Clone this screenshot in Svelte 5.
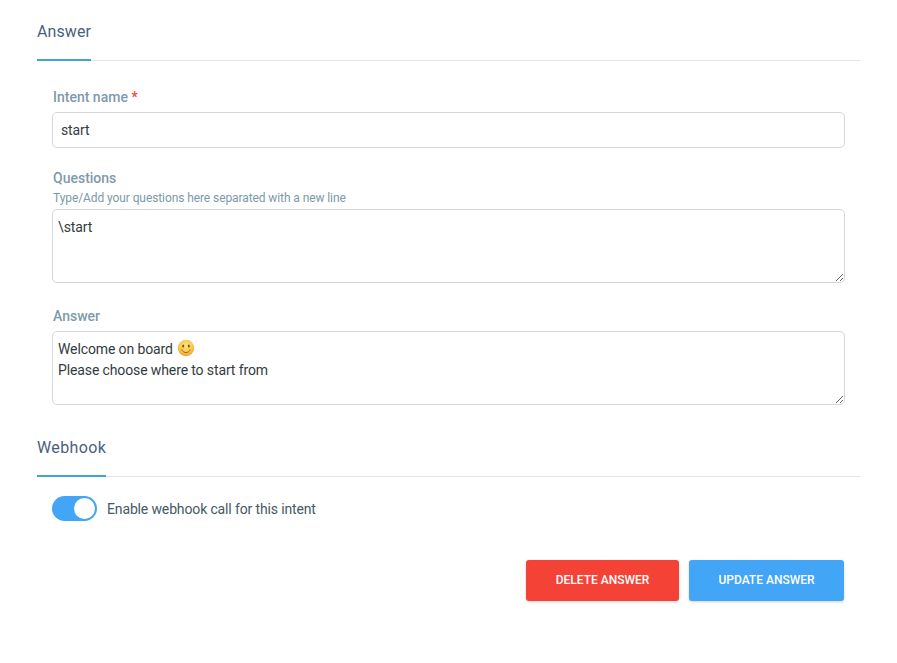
<script>
  let intent = $state('start');
  let questions = $state('\\start');
  let enabled = $state(true);
</script>

<main class="page">
  <header class="section-head first"><h2>Answer</h2></header>

  <div class="fields">
    <label class="field">
      <span class="label">Intent name <em>*</em></span>
      <input class="control" type="text" bind:value={intent} />
    </label>

    <label class="field">
      <span class="label">Questions</span>
      <span class="hint">Type/Add your questions here separated with a new line</span>
      <textarea class="control area" bind:value={questions}></textarea>
    </label>

    <div class="field last">
      <span class="label">Answer</span>
      <div class="control area rich" role="textbox" tabindex="0">
        <div class="line">Welcome on board
          <svg class="smile" viewBox="0 0 18 18" width="18" height="18" aria-hidden="true">
            <defs>
              <radialGradient id="face" cx="50%" cy="35%" r="65%">
                <stop offset="0" stop-color="#fde27a" />
                <stop offset="0.65" stop-color="#fbc64e" />
                <stop offset="1" stop-color="#ee9b2a" />
              </radialGradient>
            </defs>
            <circle cx="9" cy="9" r="8.2" fill="url(#face)" />
            <ellipse cx="6.2" cy="7" rx="1" ry="1.5" fill="#7a5320" />
            <ellipse cx="11.8" cy="7" rx="1" ry="1.5" fill="#7a5320" />
            <path d="M4.8 10.8c1 1.9 2.5 2.7 4.2 2.7s3.2-.8 4.2-2.7" fill="none" stroke="#8a5c20" stroke-width="0.9" stroke-linecap="round" />
          </svg>
        </div>
        <div class="line">Please choose where to start from</div>
      </div>
    </div>
  </div>

  <header class="section-head webhook"><h2>Webhook</h2></header>

  <div class="toggle-row">
    <button class="switch" class:on={enabled} onclick={() => (enabled = !enabled)} aria-label="Toggle webhook"><span class="knob"></span></button>
    <span class="toggle-text">Enable webhook call for this intent</span>
  </div>

  <div class="actions">
    <button class="btn red">DELETE ANSWER</button>
    <button class="btn blue">UPDATE ANSWER</button>
  </div>
</main>

<style>
  :global(body) {
    margin: 0;
    background: #fff;
  }
  .page {
    box-sizing: border-box;
    width: 897px;
    height: 663px;
    padding: 0 37px;
    font-family: Roboto, "Liberation Sans", sans-serif;
    overflow: hidden;
  }
  .section-head {
    width: 823px;
    border-bottom: 1px solid #dfe3e6;
    box-sizing: border-box;
  }
  .section-head.first {
    padding-top: 21px;
    height: 61px;
  }
  .section-head.webhook {
    margin-top: 32px;
    height: 40px;
  }
  h2 {
    display: inline-block;
    margin: 0;
    height: 40px;
    padding-top: 1px;
    box-sizing: border-box;
    font-size: 16px;
    line-height: 20px;
    font-weight: 400;
    letter-spacing: 0.1px;
    color: #4a5f7e;
    border-bottom: 2px solid #42a5d8;
  }
  .webhook h2 { letter-spacing: 0.38px; }
  .fields {
    width: 793px;
    margin-left: 15px;
    padding-top: 28px;
    display: flex;
    flex-direction: column;
    gap: 22px;
  }
  .field {
    display: flex;
    flex-direction: column;
  }
  .field.last { margin-top: 3px; }
  .label {
    padding-left: 1px;
    font-size: 14px;
    line-height: 16px;
    font-weight: 500;
    color: #7f9aaa;
    margin-bottom: 7px;
  }
  .label em {
    font-style: normal;
    color: #f44336;
  }
  .hint {
    padding-left: 1px;
    margin-top: -2px;
    margin-bottom: 3px;
    font-size: 12px;
    line-height: 15px;
    letter-spacing: -0.09px;
    color: #7d99a8;
  }
  .control {
    box-sizing: border-box;
    width: 793px;
    height: 36px;
    padding: 0 8px;
    border: 1px solid #d4d7da;
    border-radius: 5px;
    font-family: inherit;
    font-size: 14px;
    letter-spacing: -0.12px;
    color: #333b40;
    background: #fff;
    outline: none;
  }
  .area {
    display: block;
    height: 74px;
    padding: 7px 5px;
    line-height: 21px;
    resize: vertical;
    overflow: auto;
  }
  .rich .line {
    height: 21px;
    white-space: nowrap;
  }
  .smile {
    vertical-align: -3px;
    margin-left: 1px;
  }
  .toggle-row {
    display: flex;
    align-items: center;
    gap: 10px;
    margin: 19px 0 0 15px;
  }
  .switch {
    position: relative;
    width: 45px;
    height: 25px;
    padding: 0;
    border: none;
    border-radius: 13px;
    background: #cfd8dc;
  }
  .switch.on { background: #42a5f5; }
  .knob {
    position: absolute;
    top: 2px;
    left: 2px;
    width: 21px;
    height: 21px;
    border-radius: 50%;
    background: #fff;
  }
  .switch.on .knob { left: 22px; }
  .toggle-text {
    font-size: 14px;
    letter-spacing: -0.14px;
    color: #455a64;
  }
  .actions {
    width: 807px;
    margin-top: 39px;
    display: flex;
    justify-content: flex-end;
    gap: 10px;
  }
  .btn {
    height: 41px;
    padding: 0 0 2px;
    border: none;
    border-radius: 3px;
    font-family: inherit;
    font-size: 12px;
    font-weight: 500;
    color: #fff;
    box-shadow: 0 1px 3px rgba(0, 0, 0, 0.18);
  }
  .red { width: 153px; background: #f44336; }
  .blue { width: 155px; background: #42a5f5; }
</style>
